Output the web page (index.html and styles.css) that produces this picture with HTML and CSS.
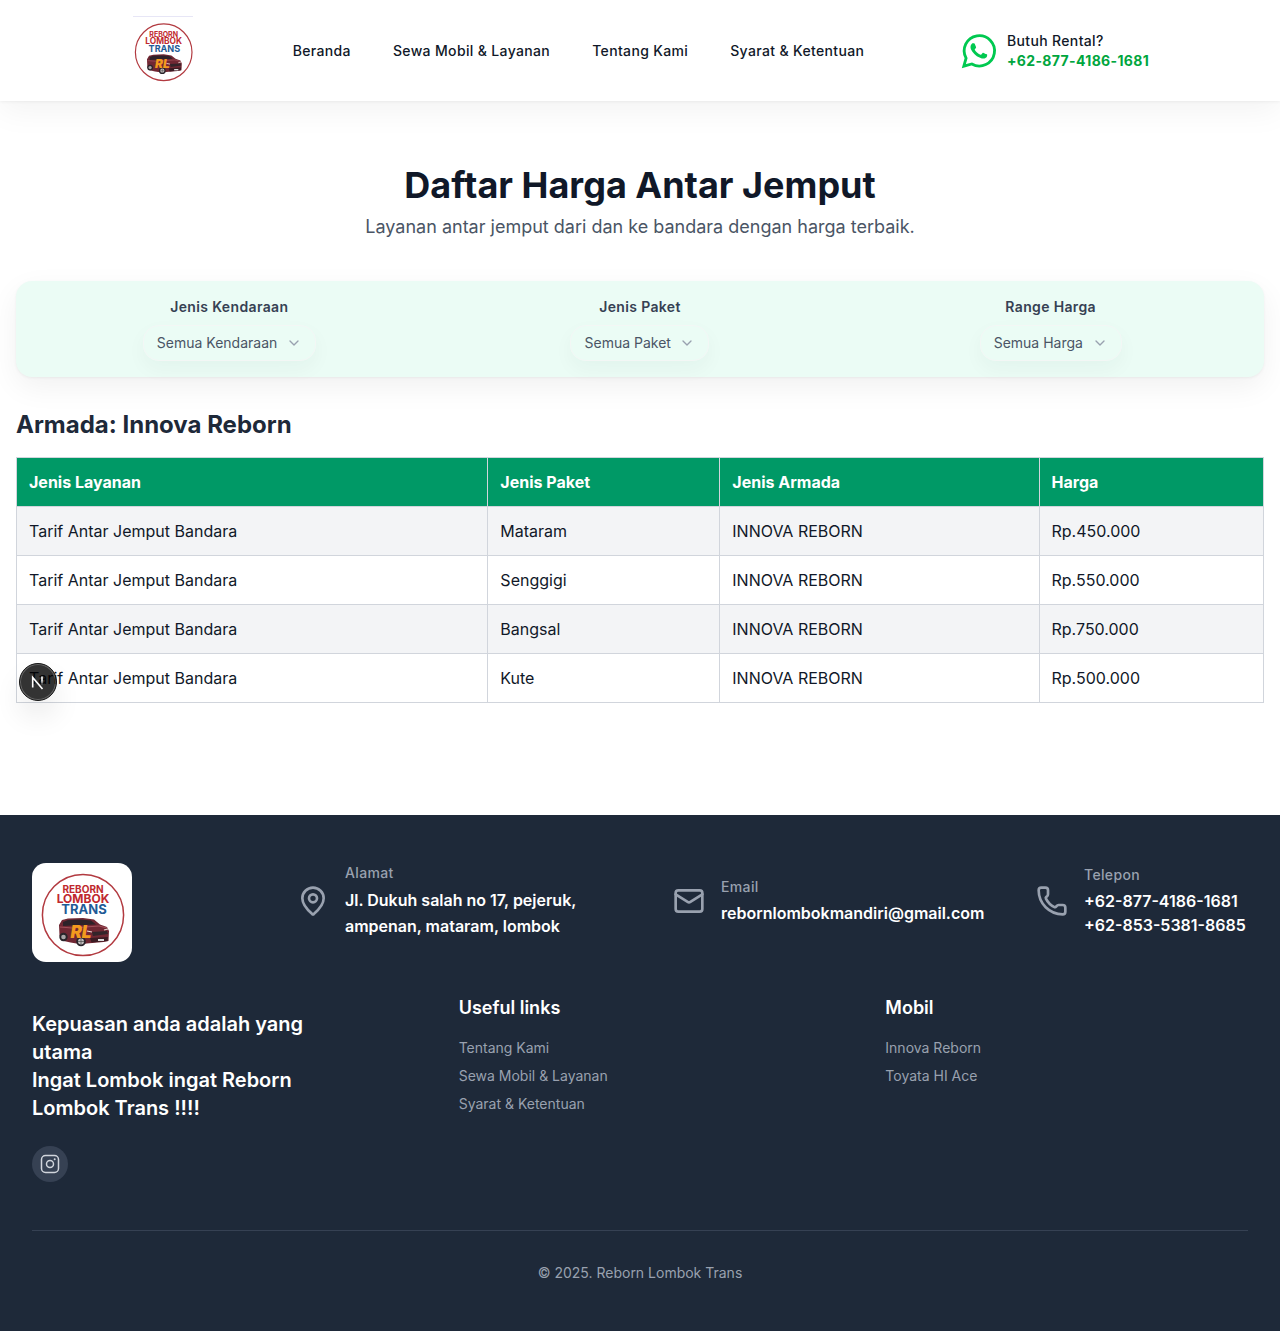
FILE: index.html
```html
<!DOCTYPE html>
<html lang="id">
<head>
<meta charset="utf-8">
<meta name="viewport" content="width=device-width, initial-scale=1">
<title>Daftar Harga Antar Jemput</title>
<link rel="stylesheet" href="styles.css">
</head>
<body>
<header class="site-header">
  <div class="header-inner">
    <a href="#" class="header-logo" aria-label="Reborn Lombok Trans">
      <svg width="70" height="69" viewBox="0 0 100 99">
        <path d="M7 .7h86" stroke="#e6e5f6" stroke-width="1.400"/>
        <circle cx="51" cy="52" r="40.600" fill="none" stroke="#b23a40" stroke-width="1.700"/>
        <text class="logo-word red" x="51" y="30" font-size="10">REBORN</text>
        <text class="logo-word red" x="51" y="40" font-size="12">LOMBOK</text>
        <text class="logo-word blue" x="52" y="51" font-size="13">TRANS</text>
        <g id="car">
          <path d="M27 62l3-5 6-1.500 15-.5 11 1.500 6 5 7 2.500 2 4-.5 10-5 1-17 1.500-4 1-12-2-9-2-2-5z" fill="#702733"/>
          <path d="M31 59l5-2 13-.5 10 1 5 4-12 .5-21 1z" fill="#2d2229"/>
          <path d="M28 64l12 1 13-1 14-1 8 2" fill="none" stroke="#a2505a"/>
          <path d="M60 69l15-1 1 3-15 2z" fill="#33242a"/>
          <path d="M58 75l18-1-.5 4-16 1.500z" fill="#3b1b23"/>
          <path d="M66 76h6v2h-6z" fill="#ddd"/>
          <path d="M55 68l5 1M72 67l4-1" stroke="#ead9d4" stroke-width="1.200"/>
          <circle cx="31.500" cy="74" r="4.200" fill="#29242a"/><circle cx="31.500" cy="74" r="2.300" fill="#a9a5a7"/>
          <circle cx="49" cy="78.500" r="4.800" fill="#29242a"/><circle cx="49" cy="78.500" r="3" fill="#c4c0c1"/>
          <path d="M49 75.500v6M46 78.500h6" stroke="#555" stroke-width=".8"/>
        </g>
        <text class="logo-mono" x="49" y="75" font-size="17">RL</text>
      </svg>
    </a>
    <nav class="main-nav">
      <a href="#">Beranda</a>
      <a href="#">Sewa Mobil &amp; Layanan</a>
      <a href="#">Tentang Kami</a>
      <a href="#">Syarat &amp; Ketentuan</a>
    </nav>
    <a href="#" class="rental">
      <svg width="40" height="40" viewBox="0 0 24 24" fill="#00c950" aria-hidden="true"><path d="M2.900 21.100l1.350-4.800a9.100 9.100 0 1 1 3.450 3.500z" fill="none" stroke="#00c950" stroke-width="1.700"/><path d="M8.392 7.308c.134-.009.268-.011.403-.004.054.004.108.010.162.016.159.018.334.115.393.249.298.676.588 1.357.868 2.041.062.151.025.346-.093.536-.060.097-.154.233-.263.373-.113.144-.356.410-.356.410s-.099.119-.061.266c.014.055.060.136.102.205l.059.094c.256.428.600.861 1.020 1.268.120.117.237.236.363.346.468.413.998.751 1.570 1.001l.005.002c.085.036.128.056.252.109.062.026.126.049.191.067.024.006.048.009.073.011.162.010.255-.094.295-.142.723-.876.790-.934.795-.933v.002c.095-.101.244-.135.378-.127.061.004.121.015.177.041.532.242 1.401.621 1.401.621l.582.261c.097.047.186.158.190.265.003.067.010.175-.014.373-.031.259-.110.570-.188.733-.055.115-.126.216-.209.302-.112.117-.196.188-.331.288-.082.061-.125.090-.125.090-.139.088-.217.131-.382.220-.258.137-.542.216-.834.231-.185.009-.371.023-.556.013-.008-.001-.568-.087-.568-.087-1.422-.374-2.737-1.074-3.841-2.046-.225-.199-.434-.413-.648-.626-.889-.885-1.562-1.839-1.970-2.742-.202-.446-.329-.922-.331-1.413-.004-.607.195-1.198.565-1.679.073-.095.142-.193.261-.306.127-.119.207-.183.294-.228.115-.059.242-.090.371-.100z"/></svg>
      <span class="rental-text"><span>Butuh Rental?</span><strong>+62-877-4186-1681</strong></span>
    </a>
  </div>
</header>

<main class="page">
  <h1>Daftar Harga Antar Jemput</h1>
  <p class="lead">Layanan antar jemput dari dan ke bandara dengan harga terbaik.</p>

  <form class="filters">
    <div class="filter">
      <label for="kendaraan">Jenis Kendaraan</label>
      <div class="select-wrap">
        <select id="kendaraan"><option>Semua Kendaraan</option></select>
        <svg class="chevron" width="16" height="16" viewBox="0 0 24 24" aria-hidden="true"><path d="M6 9l6 6 6-6"/></svg>
      </div>
    </div>
    <div class="filter">
      <label for="paket">Jenis Paket</label>
      <div class="select-wrap">
        <select id="paket"><option>Semua Paket</option></select>
        <svg class="chevron" width="16" height="16" viewBox="0 0 24 24" aria-hidden="true"><path d="M6 9l6 6 6-6"/></svg>
      </div>
    </div>
    <div class="filter">
      <label for="harga">Range Harga</label>
      <div class="select-wrap">
        <select id="harga"><option>Semua Harga</option></select>
        <svg class="chevron" width="16" height="16" viewBox="0 0 24 24" aria-hidden="true"><path d="M6 9l6 6 6-6"/></svg>
      </div>
    </div>
  </form>

  <h2>Armada: Innova Reborn</h2>
  <table class="prices">
    <colgroup><col class="col-service"><col class="col-package"><col class="col-fleet"><col class="col-price"></colgroup>
    <thead><tr><th>Jenis Layanan</th><th>Jenis Paket</th><th>Jenis Armada</th><th>Harga</th></tr></thead>
    <tbody>
      <tr><td>Tarif Antar Jemput Bandara</td><td>Mataram</td><td>INNOVA REBORN</td><td>Rp.450.000</td></tr>
      <tr><td>Tarif Antar Jemput Bandara</td><td>Senggigi</td><td>INNOVA REBORN</td><td>Rp.550.000</td></tr>
      <tr><td>Tarif Antar Jemput Bandara</td><td>Bangsal</td><td>INNOVA REBORN</td><td>Rp.750.000</td></tr>
      <tr><td>Tarif Antar Jemput Bandara</td><td>Kute</td><td>INNOVA REBORN</td><td>Rp.500.000</td></tr>
    </tbody>
  </table>
</main>

<footer class="site-footer">
  <div class="footer-top">
    <svg class="footer-logo" width="100" height="99" viewBox="0 0 100 99" role="img" aria-label="Reborn Lombok Trans">
      <rect width="100" height="99" fill="#fff"/>
      <circle cx="51" cy="52" r="40.600" fill="none" stroke="#b23a40" stroke-width="1.500"/>
      <text class="logo-word red" x="51" y="30" font-size="10">REBORN</text>
      <text class="logo-word red" x="51" y="40" font-size="12">LOMBOK</text>
      <text class="logo-word blue" x="52" y="51" font-size="13">TRANS</text>
      <use href="#car"/>
      <text class="logo-mono" x="49" y="75" font-size="17">RL</text>
    </svg>
    <div class="contacts">
      <div class="contact">
        <svg class="line-icon" width="32" height="32" viewBox="0 0 24 24" aria-hidden="true"><path d="M20 10c0 4.993-5.539 10.193-7.399 11.799a1 1 0 0 1-1.202 0C9.539 20.193 4 14.993 4 10a8 8 0 0 1 16 0"/><circle cx="12" cy="10" r="3"/></svg>
        <div><span class="contact-label">Alamat</span><p class="address">Jl. Dukuh salah no 17, pejeruk, ampenan, mataram, lombok</p></div>
      </div>
      <div class="contact">
        <svg class="line-icon" width="32" height="32" viewBox="0 0 24 24" aria-hidden="true"><rect x="2" y="4" width="20" height="16" rx="2"/><path d="M22 7l-8.970 5.700a1.940 1.940 0 0 1-2.060 0L2 7"/></svg>
        <div class="contact-mail"><span class="contact-label">Email</span><a href="#">rebornlombokmandiri@gmail.com</a></div>
      </div>
      <div class="contact">
        <svg class="line-icon" width="32" height="32" viewBox="0 0 24 24" aria-hidden="true"><path d="M13.832 16.568a1 1 0 0 0 1.213-.303l.355-.465A2 2 0 0 1 17 15h3a2 2 0 0 1 2 2v3a2 2 0 0 1-2 2A18 18 0 0 1 2 4a2 2 0 0 1 2-2h3a2 2 0 0 1 2 2v3a2 2 0 0 1-.8 1.600l-.468.351a1 1 0 0 0-.292 1.233 14 14 0 0 0 6.392 6.384"/></svg>
        <div class="contact-phone"><span class="contact-label">Telepon</span><a href="#">+62-877-4186-1681</a><a href="#">+62-853-5381-8685</a></div>
      </div>
    </div>
  </div>

  <div class="footer-cols">
    <div class="slogan">
      <p>Kepuasan anda adalah yang utama<br>Ingat Lombok ingat Reborn Lombok Trans !!!!</p>
      <a href="#" class="social" aria-label="Instagram">
        <svg width="20" height="20" viewBox="0 0 20 20" aria-hidden="true"><rect x="1.500" y="1.500" width="17" height="17" rx="4"/><circle cx="10" cy="10" r="3.500"/><circle class="dot" cx="14.700" cy="5.300" r="1"/></svg>
      </a>
    </div>
    <nav class="link-list">
      <h3>Useful links</h3>
      <a href="#">Tentang Kami</a>
      <a href="#">Sewa Mobil &amp; Layanan</a>
      <a href="#">Syarat &amp; Ketentuan</a>
    </nav>
    <nav class="link-list">
      <h3>Mobil</h3>
      <a href="#">Innova Reborn</a>
      <a href="#">Toyata HI Ace</a>
    </nav>
  </div>
  <p class="copyright">© 2025. Reborn Lombok Trans</p>
</footer>

<button class="dev-badge" type="button" aria-label="Dev tools">
  <svg width="20" height="20" viewBox="0 0 20 20" fill="none" aria-hidden="true">
    <defs><linearGradient id="fade" x1="0" y1="0" x2="0" y2="1"><stop offset=".4" stop-color="#fff"/><stop offset="1" stop-color="#fff" stop-opacity="0"/></linearGradient></defs>
    <path d="M4.700 15.500V5.500L14.500 17" stroke="#fff" stroke-width="1.600"/><path d="M13.200 4.500h1.600v9h-1.600z" fill="url(#fade)"/>
  </svg>
</button>
</body>
</html>
```
FILE: styles.css
```css
* { box-sizing: border-box; }
body, h1, h2, h3, p { margin: 0; }
body {
  position: relative;
  background: #fff;
  color: #101828;
  font: 16px/24px Inter, "Liberation Sans", sans-serif;
}
a { color: inherit; text-decoration: none; }
svg { display: block; flex-shrink: 0; }
.logo-word { font-family: Inter, sans-serif; font-weight: 700; text-anchor: middle; }
.red { fill: #c0282d; }
.blue { fill: #1f5b96; }
.logo-mono { font-family: Inter, sans-serif; font-weight: 900; font-style: italic; text-anchor: middle; fill: #f39a1e; }

.site-header {
  position: relative;
  padding: 16px;
  background: #fff;
  box-shadow: 0 10px 30px rgba(0, 0, 0, .05), 0 1px 3px rgba(0, 0, 0, .05);
}
.header-inner {
  display: flex;
  align-items: center;
  justify-content: space-between;
  max-width: 1024px;
  margin: 0 auto;
}
.main-nav { display: flex; gap: 42px; font-size: 14px; line-height: 20px; font-weight: 500; letter-spacing: 0.025em; }
.rental { display: flex; align-items: center; gap: 8px; font-size: 14px; line-height: 20px; font-weight: 500; letter-spacing: 0.025em; }
.rental-text { display: flex; flex-direction: column; min-width: 145px; }
.rental strong { color: #00a63e; font-weight: 700; }

.page { padding: 64px 16px 112px; }
h1 { font-size: 36px; line-height: 40px; font-weight: 700; text-align: center; }
.lead { margin-top: 8px; color: #4a5565; font-size: 18px; line-height: 28px; text-align: center; }

.filters {
  display: grid;
  grid-template-columns: repeat(3, 1fr);
  gap: 16px;
  margin-top: 40px;
  padding: 16px;
  border-radius: 16px;
  background: #ebfcf5;
  box-shadow: 0 10px 30px rgba(0, 0, 0, .06), 0 1px 3px rgba(0, 0, 0, .05);
}
.filter { display: flex; flex-direction: column; align-items: center; gap: 8px; }
.filter label { color: #364153; font-size: 14px; line-height: 20px; font-weight: 600; letter-spacing: 0.025em; }
.select-wrap { display: grid; align-items: center; }
.select-wrap > * { grid-area: 1 / 1; }
.select-wrap select {
  appearance: none;
  height: 36px;
  padding: 0 37px 0 13px;
  border: 1px solid #f3f7f5;
  border-radius: 16px;
  background: transparent;
  color: #4a5565;
  font: 400 14px/20px Inter, "Liberation Sans", sans-serif;
  box-shadow: 0 8px 20px rgba(0, 60, 40, .04);
}
.chevron { justify-self: end; margin-right: 14px; fill: none; stroke: #99a1af; stroke-width: 2; stroke-linecap: round; stroke-linejoin: round; pointer-events: none; }

h2 { margin: 32px 0 16px; color: #1e2939; font-size: 24px; line-height: 32px; font-weight: 700; }
.prices { width: 100%; border-collapse: collapse; }
.col-service { width: 37.8%; }
.col-package { width: 18.6%; }
.col-fleet { width: 25.6%; }
.col-price { width: 18%; }
.prices th, .prices td { padding: 12px; border: 1px solid #d1d5dc; text-align: left; }
.prices th { background: #009966; color: #fff; font-weight: 700; }
.prices tbody tr:nth-child(odd) { background: #f3f4f6; }

.site-footer { padding: 48px 32px; background: #1e2939; color: #fff; }
.footer-top { display: flex; align-items: flex-start; justify-content: space-between; }
.footer-logo { border-radius: 14px; }
.contacts { display: flex; align-items: center; gap: 48px; font-weight: 600; }
.contact { display: flex; align-items: center; gap: 16px; }
.contact a { display: block; }
.contact-mail { min-width: 267px; }
.contact-phone { min-width: 164px; }
.contact-label { display: block; margin-bottom: 4px; color: #99a1af; font-size: 14px; line-height: 20px; font-weight: 500; letter-spacing: 0.025em; }
.address { width: 280px; line-height: 26px; }
.line-icon { fill: none; stroke: #99a1af; stroke-width: 2; stroke-linecap: round; stroke-linejoin: round; }

.footer-cols { display: grid; grid-template-columns: repeat(3, 1fr); gap: 64px; margin-top: 32px; }
.slogan { padding-top: 16px; }
.slogan p { max-width: 320px; font-size: 20px; line-height: 28px; font-weight: 600; }
.social {
  display: flex;
  align-items: center;
  justify-content: center;
  width: 36px;
  height: 36px;
  margin-top: 24px;
  border-radius: 50%;
  background: #364153;
}
.social svg { fill: none; stroke: #d1d5dc; stroke-width: 1.5; }
.social .dot { fill: #d1d5dc; stroke: none; }
.link-list { display: flex; flex-direction: column; align-items: flex-start; gap: 8px; color: #99a1af; font-size: 14px; line-height: 20px; }
.link-list h3 { margin-bottom: 8px; color: #fff; font-size: 18px; line-height: 28px; font-weight: 600; }
.copyright {
  margin-top: 48px;
  padding-top: 32px;
  border-top: 1px solid #364153;
  color: #99a1af;
  font-size: 14px;
  line-height: 20px;
  text-align: center;
}

.dev-badge {
  position: absolute;
  top: 663px;
  left: 19px;
  display: flex;
  align-items: center;
  justify-content: center;
  width: 38px;
  height: 38px;
  padding: 0;
  border: 1px solid #171717;
  border-radius: 50%;
  background: rgba(0, 0, 0, .8);
  box-shadow: inset 0 0 0 1px rgba(255, 255, 255, .25), 0 16px 32px -8px rgba(0, 0, 0, .24);
}
```
